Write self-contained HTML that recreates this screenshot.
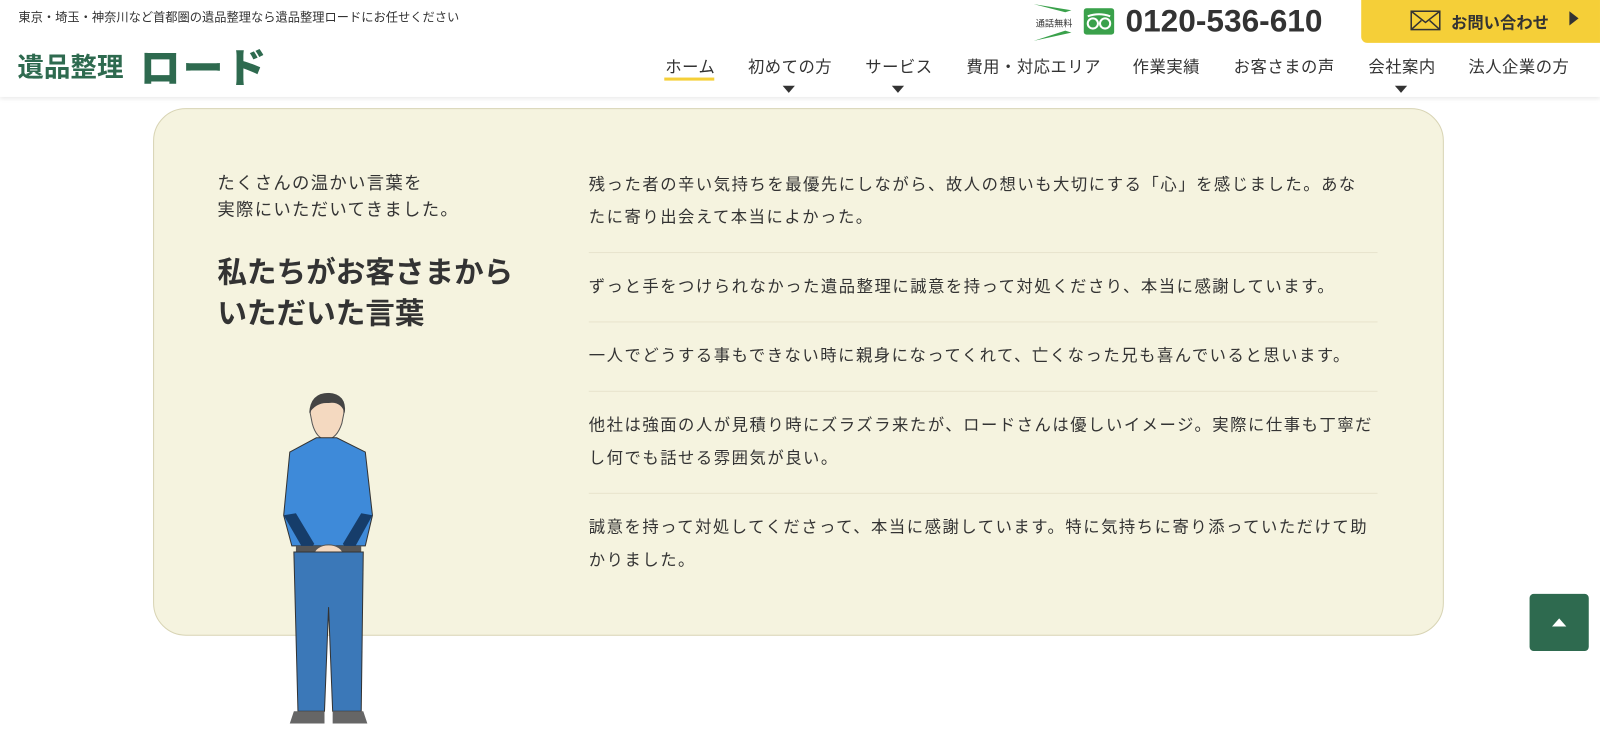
<!DOCTYPE html>
<html><head><meta charset="utf-8"><style>
*{margin:0;padding:0;box-sizing:border-box}
body{width:1600px;height:732px;background:#fff;font-family:"Liberation Sans","Noto Sans CJK JP",sans-serif;color:#333;overflow:hidden}
#w{position:relative;width:1568px;height:718px;transform:scale(1.0204);transform-origin:0 0}
.hdr{position:absolute;left:0;top:0;width:1568px;height:95px;background:#fff;box-shadow:0 2px 4px rgba(0,0,0,.08);z-index:2}
.tag{position:absolute;left:18px;top:8px;font-size:12px;color:#333}
.logo{position:absolute;left:17px;top:46px;font-size:26px;font-weight:bold;color:#2e6a4f}
.logo b{font-size:40px;position:absolute;left:120px;top:-11px;letter-spacing:2px;white-space:nowrap}
.nav{position:absolute;top:52px;font-size:16px;color:#333;letter-spacing:.5px}
.nav span{position:absolute;white-space:nowrap}
.tri{position:absolute;top:84px;width:0;height:0;border-left:6px solid transparent;border-right:6px solid transparent;border-top:7px solid #333}
.tel{position:absolute;left:1103px;top:3px;font-size:31px;font-weight:bold;color:#333}
.cta{position:absolute;left:1334px;top:0;width:234px;height:42px;background:#f5cf38;border-radius:0 0 0 6px}
.card{position:absolute;left:150px;top:106px;width:1265px;height:517px;background:#f5f3df;border:1px solid #d8d4b4;border-radius:32px}
.lead{position:absolute;left:213px;top:167px;font-size:17px;line-height:26px;color:#333;letter-spacing:1.3px}
.h2{position:absolute;left:213px;top:248px;font-size:29px;font-weight:bold;line-height:40px;color:#333}
.list{position:absolute;left:577px;top:166px;width:773px;font-size:16px;color:#333;letter-spacing:1.5px;white-space:nowrap}
.list p{line-height:32px;padding:0 0 17px;border-bottom:1px solid #e8e4cd;margin-bottom:18px}
.list p:last-child{border:none}
.top{position:absolute;left:1499px;top:582px;width:58px;height:56px;background:#2e6a4f;border-radius:4px}
</style></head><body><div id="w">
<div class="hdr">
<div class="tag">東京・埼玉・神奈川など首都圏の遺品整理なら遺品整理ロードにお任せください</div>
<div class="logo">遺品整理<b>ロード</b></div>
<svg style="position:absolute;left:1008px;top:2px" width="50" height="40"><path d="M5 2 L42 8 L36 10 Z" fill="#3aa14b"/><path d="M5 38 L42 30 L36 28 Z" fill="#3aa14b"/><text x="25" y="24" font-size="9" text-anchor="middle" fill="#333" font-family="Noto Sans CJK JP">通話無料</text></svg>
<svg style="position:absolute;left:1062px;top:8px" width="30" height="26"><rect width="30" height="26" rx="3" fill="#3aa14b"/><circle cx="9" cy="15" r="5" fill="none" stroke="#fff" stroke-width="2"/><circle cx="21" cy="15" r="5" fill="none" stroke="#fff" stroke-width="2"/><path d="M4 8 Q15 4 26 8" stroke="#fff" stroke-width="2" fill="none"/></svg>
<div class="tel">0120-536-610</div>
<div class="cta"><svg style="position:absolute;left:48px;top:10px" width="30" height="20"><rect x="1" y="1" width="28" height="18" fill="none" stroke="#333" stroke-width="1.5"/><path d="M1 1 L15 12 L29 1 M1 19 L11 10 M29 19 L19 10" fill="none" stroke="#333" stroke-width="1.5"/></svg><span style="position:absolute;left:88px;top:9px;font-size:16px;font-weight:bold;color:#333">お問い合わせ</span><span style="position:absolute;left:204px;top:11px;width:0;height:0;border-top:7px solid transparent;border-bottom:7px solid transparent;border-left:9px solid #333"></span></div>
<div class="nav">
<span style="left:652px">ホーム</span>
<span style="left:733px">初めての方</span>
<span style="left:848px">サービス</span>
<span style="left:947px">費用・対応エリア</span>
<span style="left:1110px">作業実績</span>
<span style="left:1209px">お客さまの声</span>
<span style="left:1341px">会社案内</span>
<span style="left:1439px">法人企業の方</span>
</div>
<div style="position:absolute;left:651px;top:76px;width:49px;height:3px;background:#f5cf38"></div>
<div class="tri" style="left:767px"></div><div class="tri" style="left:874px"></div><div class="tri" style="left:1367px"></div>
</div>
<div class="card"></div>
<div class="lead">たくさんの温かい言葉を<br>実際にいただいてきました。</div>
<div class="h2">私たちがお客さまから<br>いただいた言葉</div>
<div class="list">
<p>残った者の辛い気持ちを最優先にしながら、故人の想いも大切にする「心」を感じました。あな<br>たに寄り出会えて本当によかった。</p>
<p>ずっと手をつけられなかった遺品整理に誠意を持って対処くださり、本当に感謝しています。</p>
<p>一人でどうする事もできない時に親身になってくれて、亡くなった兄も喜んでいると思います。</p>
<p>他社は強面の人が見積り時にズラズラ来たが、ロードさんは優しいイメージ。実際に仕事も丁寧だ<br>し何でも話せる雰囲気が良い。</p>
<p>誠意を持って対処してくださって、本当に感謝しています。特に気持ちに寄り添っていただけて助<br>かりました。</p>
</div>
<svg style="position:absolute;left:270px;top:385px" width="105" height="330">
<path d="M34 20 Q35 2 52 2 Q68 3 67 20 L65 30 Q60 45 50 46 Q40 45 36 30 Z" fill="#f4d9c0" stroke="#555"/>
<path d="M33 20 Q34 0 52 0 Q70 1 68 20 Q64 8 52 10 Q40 9 33 20Z" fill="#444"/>
<path d="M40 44 L60 44 L88 58 L95 120 L88 150 L16 150 L8 120 L14 58 Z" fill="#3e8ad9" stroke="#333"/>
<path d="M8 120 L20 118 L38 148 L30 158 Z" fill="#163d6a"/><path d="M95 120 L84 118 L66 148 L74 158 Z" fill="#163d6a"/>
<rect x="20" y="150" width="64" height="6" fill="#555"/>
<ellipse cx="52" cy="158" rx="14" ry="9" fill="#f4d9c0" stroke="#555"/>
<path d="M18 156 L86 156 L84 312 L56 312 L52 210 L48 312 L22 312 Z" fill="#3b78b8" stroke="#333"/>
<path d="M18 312 L48 312 L48 324 L14 324 Z M56 312 L86 312 L90 324 L56 324 Z" fill="#666"/>
</svg>
<div class="top"><span style="position:absolute;left:22px;top:24px;width:0;height:0;border-left:7px solid transparent;border-right:7px solid transparent;border-bottom:8px solid #fff"></span></div>
</div></body></html>
